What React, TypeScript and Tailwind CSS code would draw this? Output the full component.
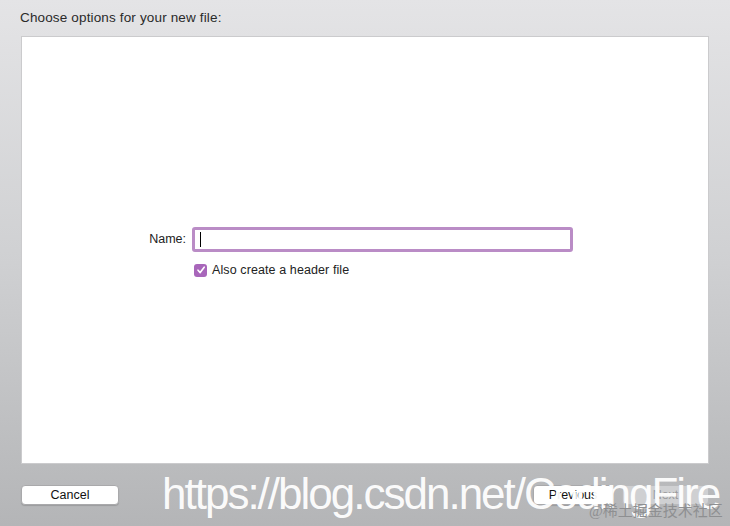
import React from "react";

export default function App() {
  return (
    <div
      className="relative w-[730px] h-[526px] overflow-hidden flex flex-col bg-gradient-to-b from-[#e4e4e6] via-[#cfd0d2] to-[#b4b5b7]"
      style={{ fontFamily: '"Liberation Sans", Arial, sans-serif' }}
    >
      {/* title */}
      <div className="h-[36px] pl-[20px] pt-[10px] text-[13.5px] leading-[16px] tracking-[0.15px] text-[#2a2a2a]">
        Choose options for your new file:
      </div>

      {/* panel */}
      <div className="ml-[21px] w-[688px] h-[428px] bg-white border border-[#cbcbcd] flex flex-col justify-center">
        <div className="ml-[126px] flex flex-col gap-[9px] mt-[6px]">
          <div className="flex items-center">
            <div className="w-[38px] text-[12.5px] text-[#222] text-right">Name:</div>
            <div className="ml-[6px] w-[381px] h-[25px] rounded-[3px] border-[3px] border-[#ba8cc6] bg-white flex items-center pl-[5px]">
              <div className="w-px h-[15px] bg-black" />
            </div>
          </div>
          <div className="ml-[46px] flex items-center gap-[5px]">
            <div className="w-[13px] h-[13px] rounded-[3px] bg-[#a866ba] flex items-center justify-center">
              <svg width="10" height="10" viewBox="0 0 10 10">
                <path d="M2 5.2 L4.2 7.6 L8.2 2.2" fill="none" stroke="white" strokeWidth="1.6" strokeLinecap="round" strokeLinejoin="round" />
              </svg>
            </div>
            <div className="text-[12.5px] tracking-[0.1px] text-[#222]">Also create a header file</div>
          </div>
        </div>
      </div>

      {/* bottom buttons */}
      <div className="flex items-start pt-[21px] pl-[21px] pr-[21px]">
        <button className="w-[98px] h-[20px] rounded-[4px] bg-white border border-[#a9a9ab] shadow-[0_1px_1px_rgba(0,0,0,0.15)] text-[12.5px] text-[#111] flex items-center justify-center">
          Cancel
        </button>
        <div className="flex-1" />
        <button className="w-[80px] h-[20px] rounded-[4px] bg-white border border-[#a9a9ab] shadow-[0_1px_1px_rgba(0,0,0,0.15)] text-[12.5px] text-[#111] flex items-center justify-center">
          Previous
        </button>
        <button className="ml-[9px] w-[87px] h-[20px] rounded-[4px] bg-[#cfd0d2] border border-[#b9babc] text-[12.5px] text-[#9a9a9c] flex items-center justify-center">
          Next
        </button>
      </div>

      {/* watermark overlay */}
      <div className="absolute left-[162px] top-[472px] text-[44px] leading-[44px] tracking-[-2px] text-white/95 whitespace-nowrap">
        https://blog.csdn.net/CodingFire
      </div>
      <div
        className="absolute left-[589px] top-[503px] text-[15px] leading-[17px] text-[#8e8f91] whitespace-nowrap"
        style={{ fontFamily: '"Liberation Serif", "Noto Sans CJK SC", serif' }}
      >
        @稀土掘金技术社区
      </div>
    </div>
  );
}
